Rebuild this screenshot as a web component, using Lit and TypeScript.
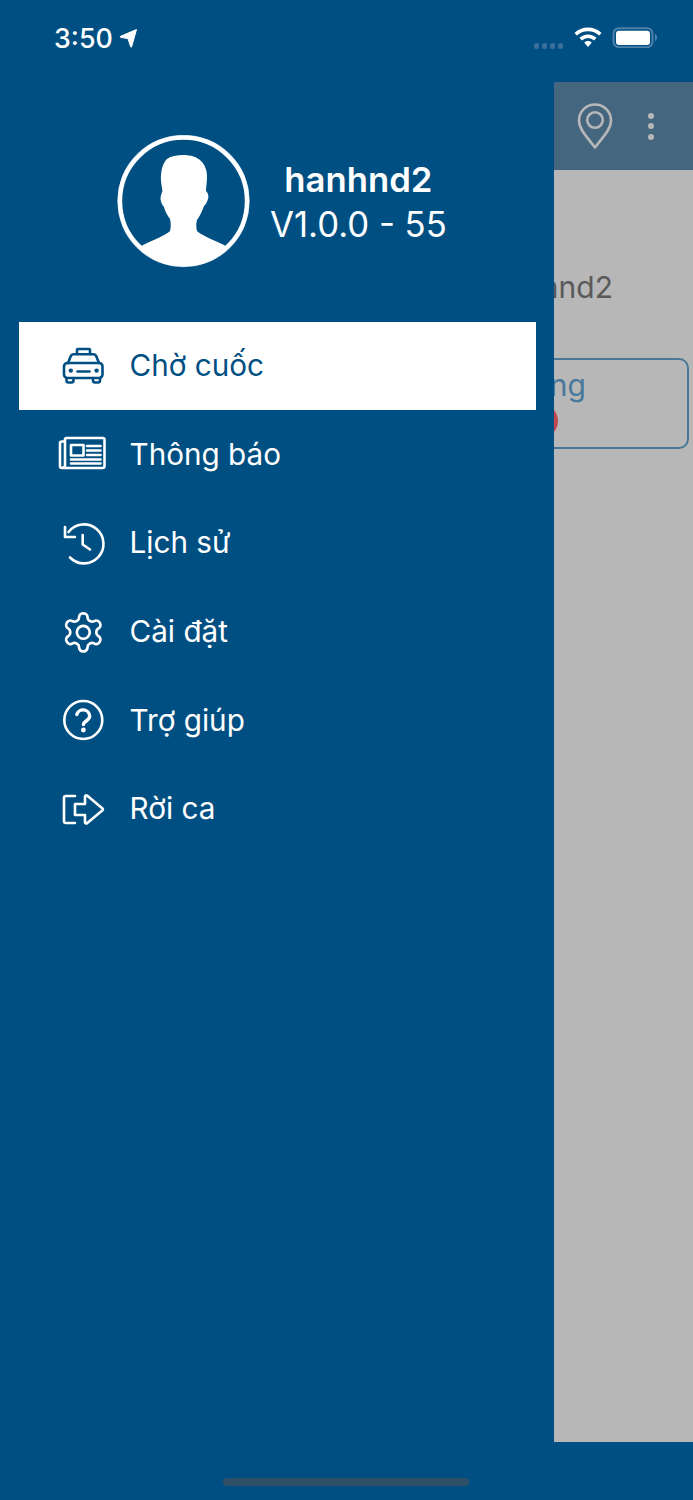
import { LitElement, css, html, svg } from 'lit'
import { customElement } from 'lit/decorators.js'

const taxi = svg`
  <path d="M19 13v-4a1 1 0 0 1 1-1h11a1 1 0 0 1 1 1v4" />
  <path d="M10 22l2.600-6.600a3.500 3.500 0 0 1 3.200-2.200h19.400a3.500 3.500 0 0 1 3.200 2.200L41 22" />
  <path d="M9.500 22h31.500a3.500 3.500 0 0 1 3.500 3.500v8a3.500 3.500 0 0 1-3.500 3.500h-31.500a3.500 3.500 0 0 1-3.500-3.500v-8a3.500 3.500 0 0 1 3.500-3.500z" />
  <path d="M8.500 37v2.500a2 2 0 0 0 2 2h3a2 2 0 0 0 2-2V37M35 37v2.500a2 2 0 0 0 2 2h3a2 2 0 0 0 2-2V37" />
  <circle cx="12.800" cy="29.600" r="2.200" fill="currentColor" stroke="none" />
  <circle cx="38.600" cy="29.600" r="2.200" fill="currentColor" stroke="none" />
  <path d="M19.500 30.500h12" />
`

const news = svg`
  <path d="M7 12.500h-3a2 2 0 0 0-2 2v22.500a2 2 0 0 0 2 2h40.500a2 2 0 0 0 2-2v-26.500a1.500 1.500 0 0 0-1.500-1.500h-36.500a1.500 1.500 0 0 0-1.500 1.500v26a2 2 0 0 1-2 2" />
  <rect x="13" y="16" width="12.500" height="10.500" />
  <path d="M29 17h13.500M29 21.500h13.500M29 26h13.500M13 30.500h29.500M13 34.500h29.500" />
`

const history = svg`
  <path d="M10.500 14a19.500 19.500 0 1 1 1.500 25.500" />
  <path d="M7 9v10h10M24.700 17v9.500l7.300 5" />
`

const gear = svg`
  <g transform="translate(2.500 2.500) scale(1.900)" stroke-width="1.400">
    <path d="M12.220 2h-.44a2 2 0 0 0-2 2v.18a2 2 0 0 1-1 1.730l-.43.25a2 2 0 0 1-2 0l-.15-.08a2 2 0 0 0-2.730.73l-.22.38a2 2 0 0 0 .73 2.730l.15.1a2 2 0 0 1 1 1.720v.51a2 2 0 0 1-1 1.740l-.15.09a2 2 0 0 0-.73 2.730l.22.38a2 2 0 0 0 2.730.73l.15-.08a2 2 0 0 1 2 0l.43.25a2 2 0 0 1 1 1.730V20a2 2 0 0 0 2 2h.44a2 2 0 0 0 2-2v-.18a2 2 0 0 1 1-1.730l.43-.25a2 2 0 0 1 2 0l.15.08a2 2 0 0 0 2.730-.73l.22-.39a2 2 0 0 0-.73-2.730l-.15-.08a2 2 0 0 1-1-1.740v-.5a2 2 0 0 1 1-1.740l.15-.09a2 2 0 0 0 .73-2.730l-.22-.38a2 2 0 0 0-2.730-.73l-.15.08a2 2 0 0 1-2 0l-.43-.25a2 2 0 0 1-1-1.730V4a2 2 0 0 0-2-2z" />
    <circle cx="12" cy="12" r="3.400" />
  </g>
`

const help = svg`
  <circle cx="25.300" cy="25" r="19" />
  <path d="M18.800 19.500a6.600 6.600 0 0 1 12.900 1.800c0 4.200-6.300 5-6.300 8.200" stroke-width="3.400" />
  <circle cx="25.400" cy="35" r="2.400" fill="currentColor" stroke="none" />
`

const leave = svg`
  <path d="M17 12h-9a2 2 0 0 0-2 2v23a2 2 0 0 0 2 2h9" />
  <path d="M17 20h10v-7.500a1.200 1.200 0 0 1 2-.9l15.500 12.800a1.200 1.200 0 0 1 0 1.800l-15.500 13a1.200 1.200 0 0 1-2-.9V31h-10z" />
`

const menu = [
  { label: 'Chờ cuốc', icon: taxi, active: true },
  { label: 'Thông báo', icon: news },
  { label: 'Lịch sử', icon: history },
  { label: 'Cài đặt', icon: gear },
  { label: 'Trợ giúp', icon: help },
  { label: 'Rời ca', icon: leave },
]

@customElement('app-root')
export class AppRoot extends LitElement {
  static styles = css`
    :host {
      display: flex;
      flex-direction: column;
      width: 693px;
      height: 1500px;
      background: #004f82;
      color: #fff;
      font-family: Inter, "Noto Sans", sans-serif;
      overflow: hidden;
    }

    .status {
      height: 82px;
      flex: none;
      display: flex;
      align-items: flex-start;
      padding: 22.500px 36px 0 54px;
      box-sizing: border-box;
    }
    .time {
      font-size: 26.800px;
      line-height: 30px;
      font-weight: 500;
    }
    .loc {
      margin: 5px 0 0 6px;
    }
    .status-right {
      margin-left: auto;
      display: flex;
      align-items: flex-start;
      margin-top: 4.500px;
    }
    .dots {
      display: flex;
      gap: 2.500px;
      margin: 16px 11px 0 0;
    }
    .dots i {
      width: 5.500px;
      height: 5.500px;
      border-radius: 50%;
      background: #3a7099;
    }
    .battery {
      margin-left: 10px;
    }

    .main {
      height: 1360px;
      flex: none;
      display: flex;
    }

    .drawer {
      width: 554px;
      flex: none;
      padding-top: 53px;
      box-sizing: border-box;
    }
    .profile {
      display: flex;
      align-items: center;
      gap: 20px;
      padding-left: 117px;
    }
    .avatar {
      width: 133px;
      height: 133px;
      flex: none;
      display: block;
    }
    .who {
      text-align: center;
      font-size: 34.700px;
      line-height: 45px;
      white-space: nowrap;
    }
    .who b {
      display: block;
      font-weight: 600;
    }

    .menu {
      margin: 53.600px 0 0 18.500px;
      width: 517px;
    }
    .item {
      height: 88.600px;
      display: flex;
      align-items: center;
      gap: 21.500px;
      padding-left: 39.500px;
      font-size: 29.700px;
      box-sizing: border-box;
    }
    .item span {
      margin-bottom: 1.500px;
    }
    .item.active {
      background: #fff;
      color: #004f82;
    }
    .item svg {
      width: 50px;
      height: 50px;
      flex: none;
      fill: none;
      stroke: currentColor;
      stroke-width: 2.600;
      stroke-linecap: round;
      stroke-linejoin: round;
    }

    .panel {
      flex: 1;
      min-width: 0;
      overflow: hidden;
      display: flex;
      flex-direction: column;
    }
    .bar {
      height: 88px;
      flex: none;
      background: #45667f;
      display: flex;
      align-items: center;
      gap: 35px;
      padding-left: 23px;
    }
    .kebab {
      display: flex;
      flex-direction: column;
      gap: 4.500px;
    }
    .kebab i {
      width: 6px;
      height: 6px;
      border-radius: 50%;
      background: #b7b7b7;
    }
    .body {
      flex: 1;
      background: #b7b7b7;
      display: flex;
      flex-direction: column;
      align-items: flex-end;
      padding-top: 99px;
    }
    .driver {
      font-size: 30px;
      line-height: 36px;
      color: #5a5a5a;
      padding-right: 80px;
      white-space: nowrap;
    }
    .slot {
      margin: 53px 4px 0 0;
      width: 300px;
      height: 91px;
      flex: none;
      box-sizing: border-box;
      border: 2px solid #4a7798;
      border-radius: 10px;
      display: flex;
      flex-direction: column;
      align-items: flex-end;
      padding-top: 7px;
    }
    .slot span {
      font-size: 30px;
      line-height: 36px;
      color: #48789b;
      margin-right: 101px;
    }
    .slot i {
      width: 34px;
      height: 34px;
      border-radius: 50%;
      background: #c4474f;
      margin: 1px 129px 0 0;
    }

    .home {
      flex: 1;
      display: flex;
      justify-content: center;
      padding: 36px 2px 0 0;
      box-sizing: border-box;
    }
    .home i {
      width: 246px;
      height: 8px;
      border-radius: 4px;
      background: #2f4f68;
    }
  `

  render() {
    return html`
      <div class="status">
        <span class="time">3:50</span>
        <svg class="loc" width="19" height="21" viewBox="0 0 19 21">
          <path d="M17.500 1.500L1.500 8.300q-.7.600 0 1L9 10.600l2.700 8.300q.4.600.9 0z" fill="#fff" stroke="#fff" stroke-width="1" stroke-linejoin="round" />
        </svg>
        <div class="status-right">
          <div class="dots"><i></i><i></i><i></i><i></i></div>
          <svg width="28" height="21" viewBox="0 0 28 21">
            <path d="M14 0.500c5.300 0 10 2 13.500 5.400l-2.400 2.700A16 16 0 0 0 14 4.300 16 16 0 0 0 2.900 8.600L.5 5.900C4 2.500 8.700.5 14 .5z" fill="#fff" />
            <path d="M14 7.500c3.300 0 6.300 1.300 8.500 3.300l-2.400 2.700A9 9 0 0 0 14 11a9 9 0 0 0-6.100 2.500l-2.400-2.700c2.200-2 5.200-3.300 8.500-3.300z" fill="#fff" />
            <path d="M14 14c1.500 0 2.800.6 3.800 1.500L14 20l-3.800-4.500c1-.9 2.300-1.500 3.800-1.500z" fill="#fff" />
          </svg>
          <svg class="battery" width="45" height="21" viewBox="0 0 45 21">
            <rect x="1.500" y="1.200" width="39" height="19" rx="5.500" fill="none" stroke="#4f82aa" stroke-width="2" />
            <rect x="4" y="3.700" width="34" height="14.300" rx="3" fill="#fff" />
            <path d="M43 7c1.300.4 2 1.800 2 3.500s-.7 3.100-2 3.500z" fill="#4f82aa" />
          </svg>
        </div>
      </div>

      <div class="main">
        <nav class="drawer">
          <div class="profile">
            <svg class="avatar" viewBox="0 0 133 133">
              <defs>
                <clipPath id="face"><circle cx="66.500" cy="66" r="63" /></clipPath>
              </defs>
              <circle cx="66.500" cy="66" r="65.800" fill="none" stroke="#c3d4e2" stroke-width="0.800" />
              <circle cx="66.500" cy="66" r="63.500" fill="none" stroke="#fff" stroke-width="4.400" />
              <g clip-path="url(#face)">
                <path fill="#fff" d="M66 20C74 20 80 22 84 26C88 30 90 35 90 42C90 47 89 52 89 56C91 58 92 61 91 64C90 67 89 69 87 71C85 77 82 82 80 85C79 89 79 92 80 96C84 100 94 104 107 110L133 133L0 133L26 110C39 104 49 100 53 96C54 92 54 88 53 84C50 80 48 76 47 72C45 70 44 67 43.500 64C43.500 61 44.500 58 45.500 56C44.500 50 43.500 45 44 40C44.500 34 46 28 50 24C54 21 60 20 66 20z" />
              </g>
            </svg>
            <div class="who">
              <b>hanhnd2</b>
              V1.0.0 - 55
            </div>
          </div>
          <div class="menu">
            ${menu.map(m => html`
              <div class="item ${m.active ? 'active' : ''}">
                <svg viewBox="0 0 50 50">${m.icon}</svg>
                <span>${m.label}</span>
              </div>
            `)}
          </div>
        </nav>

        <section class="panel">
          <div class="bar">
            <svg width="36" height="46" viewBox="0 0 36 46" fill="none" stroke="#b7b7b7" stroke-width="2.600" stroke-linejoin="round">
              <path d="M18 44.500C11 35 2 26.500 2 17.500a16 16 0 0 1 32 0C34 26.500 25 35 18 44.500z" />
              <circle cx="18" cy="17" r="7.800" />
            </svg>
            <div class="kebab"><i></i><i></i><i></i></div>
          </div>
          <div class="body">
            <div class="driver">hanhnd2</div>
            <div class="slot">
              <span>Trống</span>
              <i></i>
            </div>
          </div>
        </section>
      </div>

      <div class="home"><i></i></div>
    `
  }
}
